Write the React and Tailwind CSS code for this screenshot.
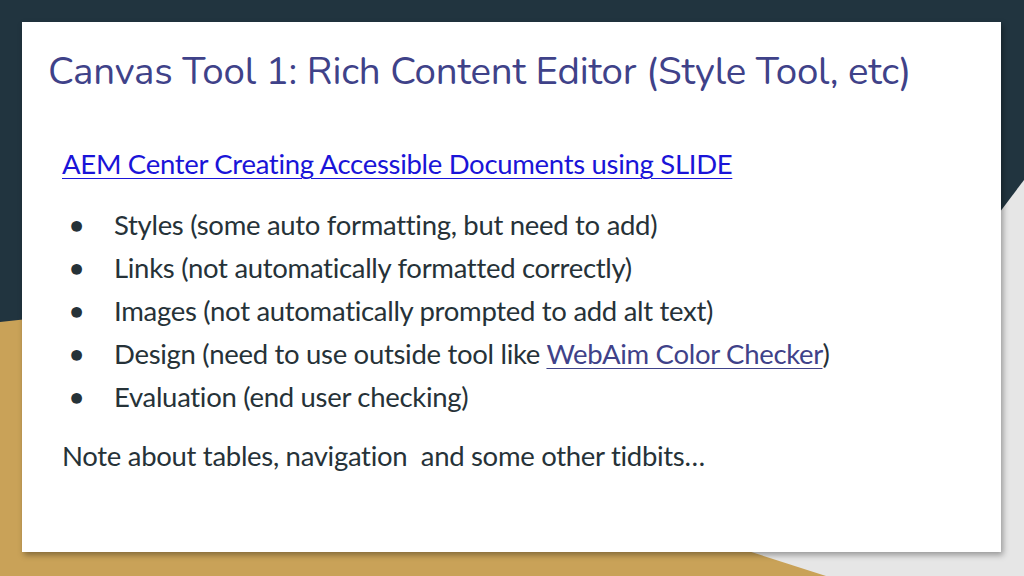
export default function App() {
  const items = [
    'Styles (some auto formatting, but need to add)',
    'Links (not automatically formatted correctly)',
    'Images (not automatically prompted to add alt text)',
    null,
    'Evaluation (end user checking)',
  ]
  return (
    <div className="relative w-[1024px] h-[576px] overflow-hidden bg-[#21343f]" style={{ fontFamily: 'Lato, sans-serif' }}>
      {/* background shapes */}
      <svg className="absolute inset-0" width="1024" height="576">
        <polygon points="0,322 1024,210 1024,576 0,576" fill="#c9a258" />
        <polygon points="1024,180 1024,576 826,576 745,550" fill="#e6e6e6" />
      </svg>
      <div className="absolute left-[22px] top-[22px] w-[979px] h-[530px] bg-white shadow-[2px_3px_6px_rgba(0,0,0,0.35)] px-[26px] pt-[26px]">
        <h1 className="text-[38.5px] leading-[48px] text-[#3f4289] tracking-[-0.2px]" style={{ fontFamily: '"Nunito", Lato, sans-serif' }}>
          Canvas Tool 1: Rich Content Editor (Style Tool, etc)
        </h1>
        <div className="pl-[14px] text-[#263238] text-[27.5px] tracking-[-0.3px]">
          <a className="block mt-[48px] text-[#1a14d8] underline decoration-1 underline-offset-[4px] leading-[40px]">
            AEM Center Creating Accessible Documents using SLIDE
          </a>
          <ul className="mt-[19px]">
            {items.map((t, i) => (
              <li key={i} className="flex items-center h-[43px]">
                <span className="w-[52px] pl-[8px] text-[22px]">●</span>
                {t ?? (
                  <span>
                    Design (need to use outside tool like{' '}
                    <a className="text-[#3f4289] underline decoration-1 underline-offset-[4px]">WebAim Color Checker</a>)
                  </span>
                )}
              </li>
            ))}
          </ul>
          <p className="mt-[18px] leading-[40px]">Note about tables, navigation&nbsp; and some other tidbits…</p>
        </div>
      </div>
    </div>
  )
}
